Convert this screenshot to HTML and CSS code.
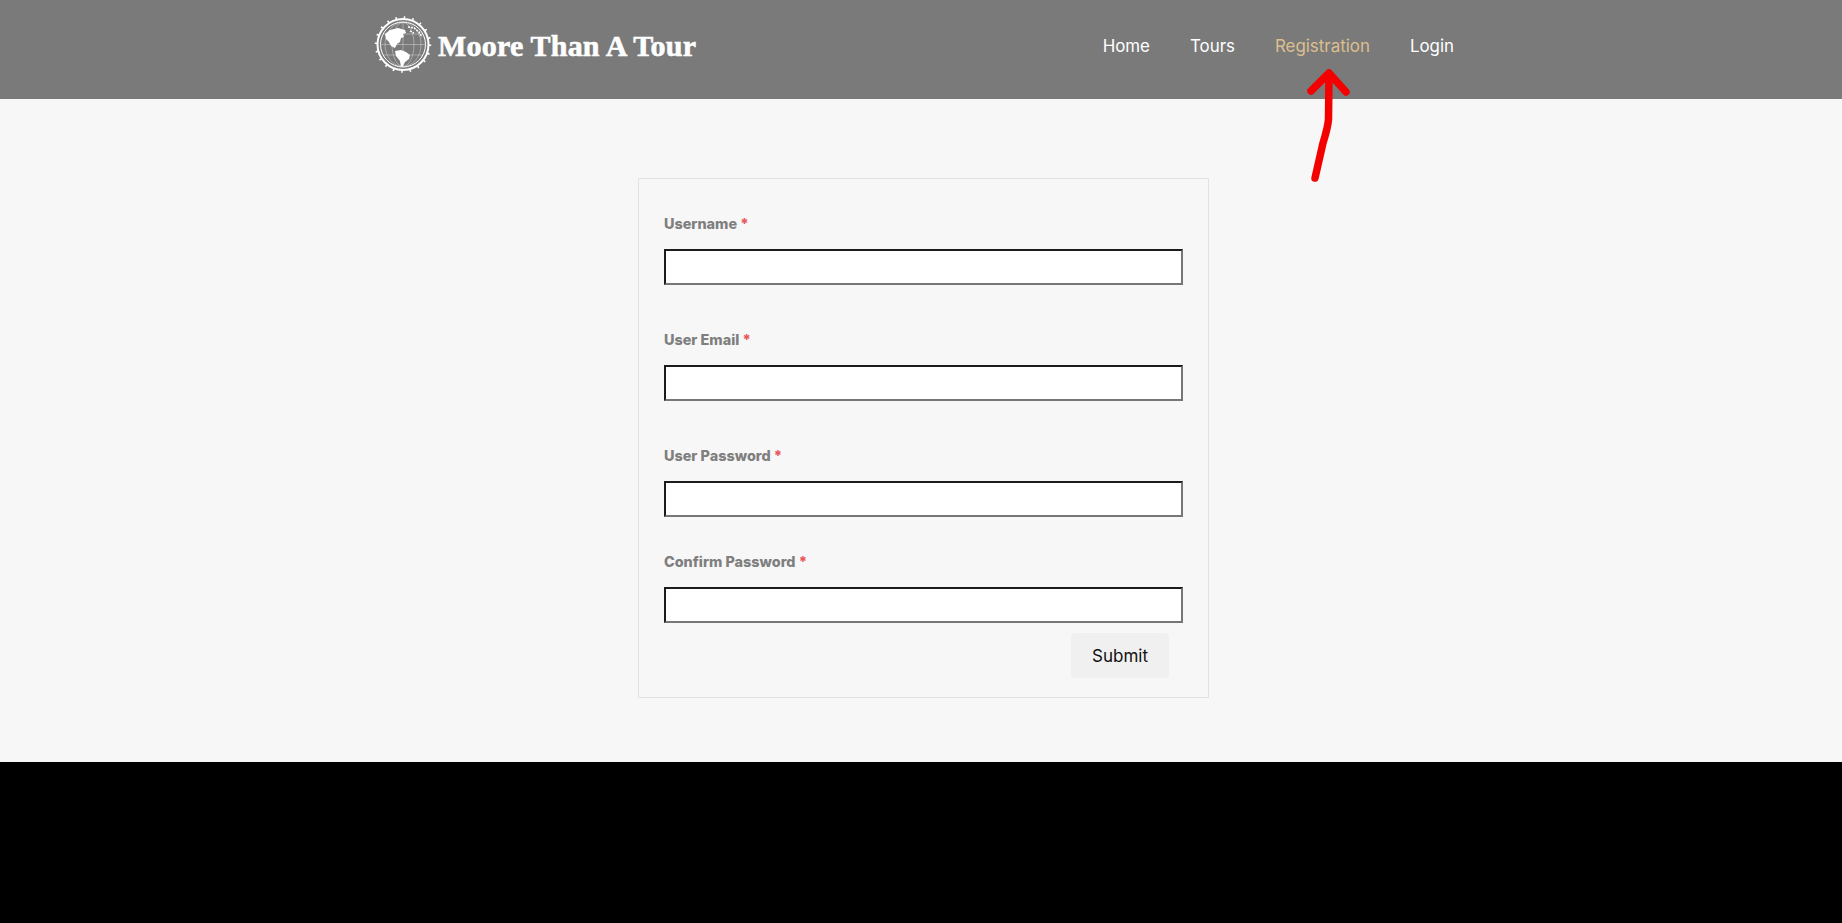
FILE: index.html
```html
<!DOCTYPE html>
<html lang="en">
<head>
    <meta charset="UTF-8">
    <meta name="viewport" content="width=device-width, initial-scale=1.0">
    <title>Registration - Moore Than A Tour</title>
    <link rel="stylesheet" href="styles.css">
</head>
<body>
    <header class="site-header">
        <div class="header-inner">
            <a class="brand" href="#">
                <svg class="brand-globe" viewBox="0 0 70 70" width="70" height="70" aria-hidden="true">
                    <circle class="ring-teeth" cx="33" cy="34.5" r="27"/>
                    <circle class="ring" cx="33" cy="34.5" r="25.5"/>
                    <circle class="ring-thin" cx="33" cy="34.5" r="22.5"/>
                    <g class="grid">
                        <ellipse cx="33" cy="34.5" rx="11" ry="22"/>
                        <ellipse cx="33" cy="34.5" rx="18" ry="22"/>
                        <path d="M11 34.5h44M14 24h38M14 45h38M33 12v45"/>
                    </g>
                    <path class="land" d="M15 24l5-4 8-2 7 2 1 3-3 1 1 3-3 1-1 4-3 2-2 4-4-2-2-4-3-3z"/>
                    <path class="land" d="M25 41l6-1 5 2 4 3-1 4-4 3-2 4-2 1-1-6-4-5z"/>
                    <path class="spots" d="M38 17l6 1 5 4 3 5M40 21l4 2"/>
                </svg>
                <span class="brand-name">Moore Than A Tour</span>
            </a>
            <nav class="main-nav">
                <a href="#">Home</a>
                <a href="#">Tours</a>
                <a class="current" href="#">Registration</a>
                <a href="#">Login</a>
            </nav>
        </div>
    </header>

    <main class="content">
        <form class="register-form">
            <div class="field">
                <label for="username">Username <span class="req">*</span></label>
                <input type="text" id="username">
            </div>
            <div class="field">
                <label for="email">User Email <span class="req">*</span></label>
                <input type="text" id="email">
            </div>
            <div class="field field-short">
                <label for="password">User Password <span class="req">*</span></label>
                <input type="password" id="password">
            </div>
            <div class="field field-last">
                <label for="confirm">Confirm Password <span class="req">*</span></label>
                <input type="password" id="confirm">
            </div>
            <div class="form-actions">
                <button type="button">Submit</button>
            </div>
        </form>
    </main>

    <footer class="site-footer"></footer>

    <!-- red marker drawn on top of the screenshot -->
    <svg class="marker" viewBox="0 0 60 120" width="60" height="120" aria-hidden="true">
        <path d="M16 111L24 76Q29 60 29.5 52L30 6M12 24L30 6L47 25"/>
    </svg>
</body>
</html>
```

FILE: styles.css
```css
* {
    margin: 0;
    padding: 0;
    box-sizing: border-box;
    font-family: 'Inter', 'Open Sans', Arial, sans-serif;
}

body {
    background: #000;
    min-height: 100vh;
}

.site-header {
    background: #7a7a7a;
    height: 99px;
}

.header-inner {
    width: 1092px;
    margin: 0 auto;
    height: 100%;
    display: flex;
    align-items: center;
    justify-content: space-between;
}

.brand {
    display: flex;
    align-items: center;
    color: #fff;
    text-decoration: none;
    margin-left: -5px;
    margin-top: -9px;
}

.brand-name {
    font-family: 'Liberation Serif', serif;
    font-weight: 700;
    font-size: 30px;
    letter-spacing: 0.2px;
    margin-left: -2px;
    margin-top: 2px;
    -webkit-text-stroke: 0.6px #fff;
}

.brand-globe {
    display: block;
    fill: none;
    stroke: #fff;
}

.ring { stroke-width: 2; }
.ring-thin { stroke-width: 1; }
.ring-teeth { stroke-width: 2.5; stroke-dasharray: 1.6 6.9; }
.grid { stroke-width: 0.5; opacity: 0.7; }
.land { fill: #fff; stroke: none; }
.spots { stroke-width: 1.6; stroke-dasharray: 2 1; }

.main-nav {
    display: flex;
    gap: 40px;
    margin-top: -8px;
    margin-right: 13px;
}

.main-nav a {
    color: #fff;
    text-decoration: none;
    font-size: 16.9px;
    font-weight: 400;
}

.main-nav a.current {
    color: #ddbf8f;
}

.content {
    background: #f7f7f7;
    height: 663px;
    padding-top: 79px;
    padding-left: 5px;
}

.register-form {
    width: 571px;
    margin: 0 auto;
    border: 1px solid #e2e2e2;
    padding: 35px 25px 19px;
}

.field {
    margin-bottom: 45px;
}

.field-short {
    margin-bottom: 35px;
}

.field-last {
    margin-bottom: 10px;
}

.field label {
    display: block;
    height: 20px;
    line-height: 20px;
    margin-bottom: 15px;
    font-size: 14.4px;
    font-weight: 800;
    color: #7f7f7f;
}

.req {
    color: #e8565a;
}

.field input {
    display: block;
    width: 100%;
    height: 36px;
    background: #fff;
    border: 2px solid;
    border-color: #1c1c1c #767676 #767676 #1c1c1c;
}

.form-actions {
    display: flex;
    justify-content: flex-end;
    padding-right: 14px;
}

.form-actions button {
    width: 98px;
    height: 45px;
    background: #f0f0f0;
    border: none;
    border-radius: 3px;
    color: #111;
    font-size: 17px;
    font-weight: 400;
}

.site-footer {
    background: #000;
    height: 161px;
}

.marker {
    position: absolute;
    left: 1299px;
    top: 67px;
    fill: none;
    stroke: #f40000;
    stroke-width: 7.5;
    stroke-linecap: round;
    stroke-linejoin: round;
}
```
